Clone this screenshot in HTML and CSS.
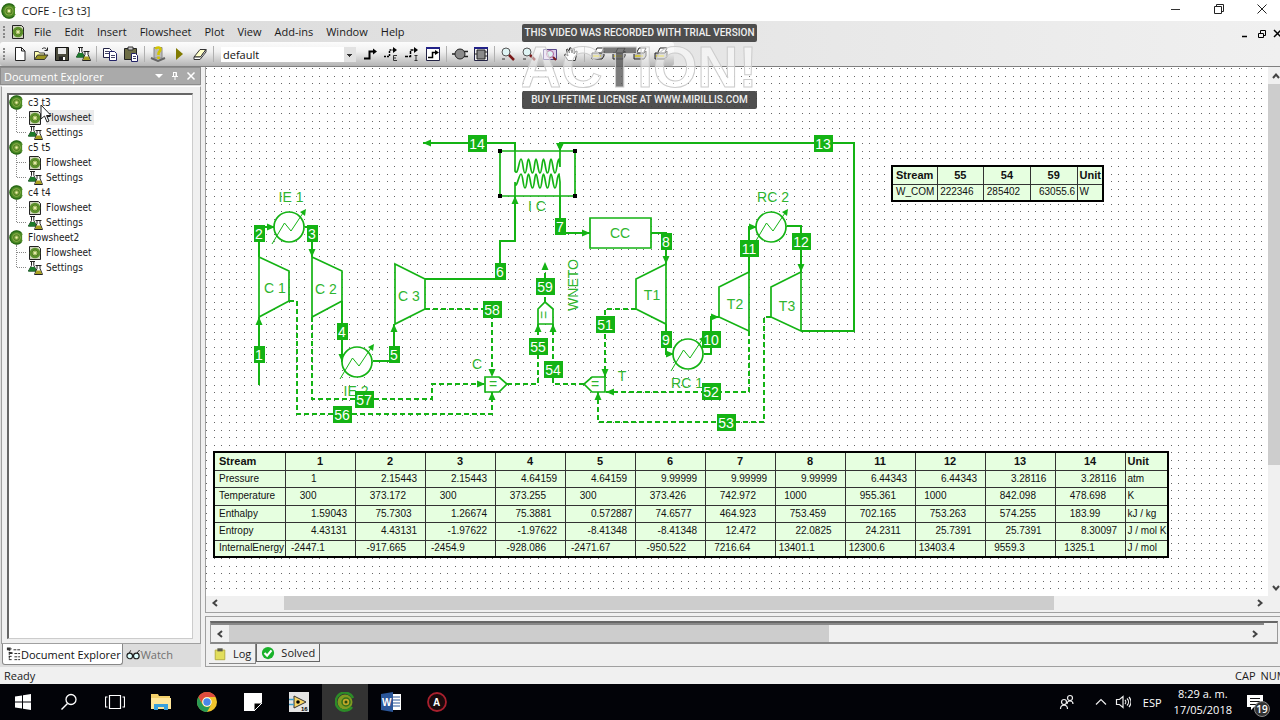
FILE: index.html
```html
<!DOCTYPE html>
<html lang="en">
<head>
    <meta charset="UTF-8">
    <meta name="viewport" content="width=device-width, initial-scale=1.0">
    <title>COFE - [c3 t3]</title>
    <link rel="stylesheet" href="styles.css">
</head>
<body>
    <!-- shared icons -->
    <svg class="sprite" aria-hidden="true">
        <symbol id="i-cofe" viewBox="0 0 16 16">
            <circle cx="8" cy="8" r="7.500" fill="#4c8a24"/>
            <path d="M13 3A7 7 0 1 0 13 13" fill="none" stroke="#2a6a18" stroke-width="1.500"/>
            <circle cx="8" cy="8" r="4.500" fill="#8cb04a"/>
            <circle cx="8" cy="8" r="3" fill="none" stroke="#4f7d22" stroke-width="1.200"/>
            <circle cx="8" cy="8" r="1.200" fill="#f1efb0"/>
            <path d="M14 5v6l2 1V4z" fill="#fff"/>
        </symbol>
        <symbol id="i-sheet" viewBox="0 0 16 16">
            <path d="M2.500 1.500h9l2 2v11h-11z" fill="#cfd3bd" stroke="#222"/>
            <circle cx="8" cy="8" r="5.300" fill="#5d922c"/>
            <circle cx="8" cy="8" r="3" fill="#a9c268" stroke="#4f7d22"/>
            <circle cx="8" cy="8" r="1" fill="#f6f3c4"/>
        </symbol>
        <symbol id="i-flask" viewBox="0 0 16 16">
            <path d="M3 1.500h5M4.500 1.500v4L1.500 11h8L6.800 5.500v-4" fill="#fff" stroke="#222"/>
            <path d="M3.500 7h4l2.500 4.500H1z" fill="#1c7a2c"/>
            <path d="M8.500 5.500h6M10 5.500v3L7.500 14.500h8L13 8.500v-3" fill="#fff" stroke="#222"/>
            <path d="M9.500 10.500h4l1.500 3.500H8z" fill="#a8a020"/>
        </symbol>
        <symbol id="i-zoom" viewBox="0 0 16 16">
            <circle cx="6" cy="6" r="4" fill="#dff4f4" stroke="#555"/>
            <path d="M9 9l5 5" stroke="#7a1a1a" stroke-width="2.500"/>
            <path d="M2 13h3" stroke="#333"/>
        </symbol>
        <symbol id="i-print" viewBox="0 0 16 16">
            <path d="M5 6l2-4h7l-2 4" fill="#fff" stroke="#222"/>
            <path d="M2 7h10l2-2v5l-2 3H2z" fill="#bbb" stroke="#222"/>
            <path d="M3 10h8" stroke="#d8c820" stroke-width="1.500"/>
        </symbol>
        <symbol id="i-unit" viewBox="0 0 16 16">
            <circle cx="8" cy="8" r="5" fill="#8a8a8a" stroke="#222"/>
            <path d="M0 8h3M12 5.500h4M12 10.500h4" stroke="#222" stroke-width="1.500"/>
        </symbol>
    </svg>

    <header class="titlebar">
        <svg class="icon"><use href="#i-cofe"/></svg>
        <h1>COFE - [c3 t3]</h1>
        <div class="window-buttons">
            <button aria-label="Minimize"><svg viewBox="0 0 12 12"><path d="M1 6.500h9" stroke="#333"/></svg></button>
            <button aria-label="Restore"><svg viewBox="0 0 12 12"><path d="M1.500 3.500h7v7h-7zM3.500 3V1.500h7v7H9" fill="none" stroke="#222"/></svg></button>
            <button aria-label="Close"><svg viewBox="0 0 12 12"><path d="M1.500 1.500l9 9M10.500 1.500l-9 9" stroke="#222"/></svg></button>
        </div>
    </header>

    <nav class="menubar">
        <span class="grip"></span>
        <svg class="icon"><use href="#i-sheet"/></svg>
        <button>File</button>
        <button>Edit</button>
        <button>Insert</button>
        <button>Flowsheet</button>
        <button>Plot</button>
        <button>View</button>
        <button>Add-ins</button>
        <button>Window</button>
        <button>Help</button>
        <div class="child-buttons">
            <button aria-label="Minimize document"><svg viewBox="0 0 10 10"><path d="M1 7.500h5" stroke="#000" stroke-width="1.500"/></svg></button>
            <button aria-label="Restore document"><svg viewBox="0 0 10 10"><path d="M1.500 4.500h5v4h-5zM3.500 4V1.500h5v5H7" fill="none" stroke="#000"/></svg></button>
            <button aria-label="Close document"><svg viewBox="0 0 10 10"><path d="M1 1l7 7M8 1L1 8" stroke="#000" stroke-width="1.500"/></svg></button>
        </div>
    </nav>

    <div class="toolbar-row">
        <div class="toolbar">
            <span class="grip"></span>
            <div class="group">
                <button aria-label="New"><svg viewBox="0 0 16 16"><path d="M3.500 1.500h6l3.500 3.500v9.500h-9.500zM9.500 1.500V5H13" fill="#fff" stroke="#222"/></svg></button>
                <button aria-label="Open"><svg viewBox="0 0 16 16"><path d="M1.500 13.500v-8h4l1 1.500h5v2" fill="#ffffb0" stroke="#444"/><path d="M1.500 13.500L4.500 9H15l-3.500 4.500z" fill="#9a9420" stroke="#333"/><path d="M9 3c2-2 4-1 5 1M14.500 1.500V4.500H11.500" fill="none" stroke="#222"/></svg></button>
                <button aria-label="Save"><svg viewBox="0 0 16 16"><path d="M1.500 1.500h13v13h-13z" fill="#4a4a3c" stroke="#111"/><path d="M4 2h8v6H4z" fill="#e8e8e8"/><path d="M5 10.500h6v4H5z" fill="#222"/><path d="M9 11h2v3H9z" fill="#fff"/></svg></button>
                <button aria-label="Settings"><svg><use href="#i-flask"/></svg></button>
            </div>
            <span class="separator"></span>
            <div class="group">
                <button aria-label="Copy"><svg viewBox="0 0 16 16"><path d="M1.500 2.500h6l2 2v7h-8z" fill="#fff" stroke="#224"/><path d="M7.500 5.500h5l2 2v7h-7z" fill="#fff" stroke="#226"/><path d="M3 5.500h4M3 7.500h4M9 9.500h4M9 11.500h4" stroke="#446"/></svg></button>
                <button aria-label="Paste"><svg viewBox="0 0 16 16"><path d="M1.500 2.500h12v11h-12z" fill="#6d6d45" stroke="#222"/><path d="M5 1h5v3H5z" fill="#ccc" stroke="#333"/><path d="M8.500 7.500h4l2 2v6h-6z" fill="#fff" stroke="#226"/><path d="M10 10.500h3M10 12.500h3" stroke="#446"/></svg></button>
            </div>
            <span class="separator"></span>
            <div class="group">
                <button aria-label="Validate"><svg viewBox="0 0 16 16"><path d="M4 1.500h8V12H4z" fill="#bbb" stroke="#888"/><path d="M5.500 3c1-2 5-2 5 .5 0 2-2 2-2 4V9M8.500 10.500V13" stroke="#d2c400" stroke-width="2.500" fill="none"/><path d="M1 12l7 3 7-3" fill="none" stroke="#666" stroke-width="2"/></svg></button>
                <button aria-label="Solve"><svg viewBox="0 0 16 16"><path d="M5 2l7 6-7 6z" fill="#807a00"/></svg></button>
                <button aria-label="Reset"><svg viewBox="0 0 16 16"><path d="M2 11l6-7.500h6L8.500 11z" fill="#ffffc8" stroke="#333"/><path d="M2 11v2.500h6L14 6V3.500L8.500 11z" fill="#fff" stroke="#333"/></svg></button>
            </div>
            <span class="separator"></span>
            <select aria-label="Stream type"><option>default</option></select>
            <div class="group">
                <button aria-label="Material stream"><svg viewBox="0 0 16 16"><path d="M2 12.500h5.500V5.500H11" fill="none" stroke="#000" stroke-width="2"/><path d="M11 2.500l4 3-4 3z"/></svg></button>
                <button aria-label="Energy stream"><svg viewBox="0 0 16 16"><path d="M1 10.500h5.500V4H11" fill="none" stroke="#000" stroke-width="1.500" stroke-dasharray="2 1"/><path d="M10 1l4 3-4 3z"/><path d="M14 9.500h-3.500v5H14M10.500 12H13" fill="none" stroke="#333"/></svg></button>
                <button aria-label="Information stream"><svg viewBox="0 0 16 16"><path d="M1 10.500h5.500V4H11" fill="none" stroke="#000" stroke-width="1.500" stroke-dasharray="3 1"/><path d="M10 1l4 3-4 3z"/><path d="M10.500 9.500h3M12 9.500v5M10.500 14.500h3" fill="none" stroke="#333"/></svg></button>
                <button aria-label="Auto route"><svg viewBox="0 0 16 16"><path d="M1.500 1.500h13v13h-13z" fill="#fff" stroke="#224"/><path d="M1 2h14" stroke="#228" stroke-width="2"/><path d="M3 11.500h4.500V6.500H10" fill="none" stroke="#000" stroke-width="1.500"/><path d="M10 4l4 2.500L10 9z"/></svg></button>
            </div>
            <span class="separator"></span>
            <div class="group">
                <button aria-label="Insert unit"><svg><use href="#i-unit"/></svg></button>
                <button aria-label="Insert flowsheet unit"><svg viewBox="0 0 16 16"><path d="M1.500 1.500h13v13h-13z" fill="#eee" stroke="#224"/><path d="M1 2h14" stroke="#228" stroke-width="2"/><path d="M4 4h8v9H4z" fill="#8a8a8a" stroke="#222"/><path d="M1 8h3M12 6h3M12 10h3" stroke="#222"/></svg></button>
            </div>
            <span class="separator"></span>
            <div class="group">
                <button aria-label="Zoom in"><svg><use href="#i-zoom"/></svg></button>
                <button aria-label="Zoom out"><svg><use href="#i-zoom"/></svg></button>
                <button aria-label="Zoom to fit"><svg viewBox="0 0 16 16"><path d="M1.500 3.500h13v10h-13z" fill="#dcd0ea" stroke="#5a4a8a"/><circle cx="8" cy="8" r="3.500" fill="#dff4f4" stroke="#b05a9a"/><path d="M11 11l3 3" stroke="#7a1a1a" stroke-width="2"/></svg></button>
                <button aria-label="Pan"><svg viewBox="0 0 16 16"><path d="M5 14.500L1.500 9l1-1L5 10 3.500 3.500l1.200-.5L6.500 7V2l1.300-.3L9 7l1-4.500 1.300.3L11 8l2-3 1.200.5-2 9z" fill="#fff" stroke="#333"/></svg></button>
            </div>
            <span class="separator"></span>
            <div class="group">
                <button aria-label="Print"><svg><use href="#i-print"/></svg></button>
                <button aria-label="Print all"><svg><use href="#i-print"/></svg></button>
                <button aria-label="Print setup"><svg><use href="#i-print"/></svg></button>
                <button aria-label="Print preview"><svg><use href="#i-print"/></svg></button>
            </div>
        </div>
    </div>

    <main class="workspace">
        <aside class="explorer">
            <div class="explorer-head">
                <h2>Document Explorer</h2>
                <button aria-label="Panel menu"><svg viewBox="0 0 10 10"><path d="M1 3h8L5 7z" fill="#fff"/></svg></button>
                <button aria-label="Auto hide"><svg viewBox="0 0 10 10"><path d="M3.500 1.500h3v4M2 5.500h6M5 5.500V9M6 1v4M3.500 1v4" fill="none" stroke="#fff"/></svg></button>
                <button aria-label="Close panel"><svg viewBox="0 0 10 10"><path d="M1.500 1.500l7 7M8.500 1.500l-7 7" stroke="#fff" stroke-width="1.500"/></svg></button>
            </div>
            <div class="tree-box">
                <ul class="tree">
                    <li>
                        <span class="node"><svg class="icon"><use href="#i-cofe"/></svg>c3 t3</span>
                        <ul>
                            <li class="node"><svg class="icon"><use href="#i-sheet"/></svg><span class="selected">Flowsheet</span></li>
                            <li class="node"><svg class="icon"><use href="#i-flask"/></svg><span>Settings</span></li>
                        </ul>
                    </li>
                    <li>
                        <span class="node"><svg class="icon"><use href="#i-cofe"/></svg>c5 t5</span>
                        <ul>
                            <li class="node"><svg class="icon"><use href="#i-sheet"/></svg><span>Flowsheet</span></li>
                            <li class="node"><svg class="icon"><use href="#i-flask"/></svg><span>Settings</span></li>
                        </ul>
                    </li>
                    <li>
                        <span class="node"><svg class="icon"><use href="#i-cofe"/></svg>c4 t4</span>
                        <ul>
                            <li class="node"><svg class="icon"><use href="#i-sheet"/></svg><span>Flowsheet</span></li>
                            <li class="node"><svg class="icon"><use href="#i-flask"/></svg><span>Settings</span></li>
                        </ul>
                    </li>
                    <li>
                        <span class="node"><svg class="icon"><use href="#i-cofe"/></svg>Flowsheet2</span>
                        <ul>
                            <li class="node"><svg class="icon"><use href="#i-sheet"/></svg><span>Flowsheet</span></li>
                            <li class="node"><svg class="icon"><use href="#i-flask"/></svg><span>Settings</span></li>
                        </ul>
                    </li>
                </ul>
                <svg class="pointer" viewBox="0 0 12 19"><path d="M1 1v14l3.500-3 2.500 6 2-1-2.500-5.500H11z" fill="#fff" stroke="#222"/></svg>
            </div>
            <div class="explorer-tabs">
                <button class="active"><svg class="icon" viewBox="0 0 16 16"><path d="M3.500 2v12M1 2.500h5M3 6.500h4M3 10.500h4M3 14h4M8 3.500h7M9 7.500h6M9 11h6M9 14h6" stroke="#222" stroke-dasharray="3 1" fill="none"/><path d="M1 1h4v3H1zM4 6h3v2H4z" fill="#333"/></svg>Document Explorer</button>
                <button><svg class="icon" viewBox="0 0 16 16"><path d="M3 7l2-4M11 7l3-4 1 1" fill="none" stroke="#222"/><circle cx="4" cy="9" r="3" fill="#dff" stroke="#222" stroke-width="1.300"/><circle cx="11" cy="9" r="3" fill="#dff" stroke="#222" stroke-width="1.300"/></svg>Watch</button>
            </div>
        </aside>

        <section class="document">
            <div class="sheet-row">
                <div class="sheet">
                    <svg class="drawing" viewBox="206 67 1062 529" width="1062" height="529">
                        <defs>
                            <pattern id="grid" x="206" y="68" width="98" height="98" patternUnits="userSpaceOnUse">
                                <g class="dots">
                                    <path id="dot-row" d="M0 .5H98"/>
                                    <use href="#dot-row" y="8"/>
                                    <use href="#dot-row" y="15"/>
                                    <use href="#dot-row" y="23"/>
                                    <use href="#dot-row" y="30"/>
                                    <use href="#dot-row" y="38"/>
                                    <use href="#dot-row" y="45"/>
                                    <use href="#dot-row" y="53"/>
                                    <use href="#dot-row" y="60"/>
                                    <use href="#dot-row" y="68"/>
                                    <use href="#dot-row" y="75"/>
                                    <use href="#dot-row" y="83"/>
                                    <use href="#dot-row" y="90"/>
                                </g>
                            </pattern>
                            <marker id="arrow" viewBox="0 0 8 8" refX="8" refY="4" markerWidth="8" markerHeight="8" markerUnits="userSpaceOnUse" orient="auto">
                                <path class="head" d="M0 .5L8 4 0 7.500z"/>
                            </marker>
                            <g id="exchanger">
                                <circle r="15"/>
                                <path class="thin" d="M-17 17L-4.500-4 2 4 14-14"/>
                                <path class="head" d="M17-18l-1 7-5-4z"/>
                            </g>
                        </defs>
                        <rect x="206" y="67" width="1057" height="522" fill="url(#grid)"/>

                        <!-- material streams -->
                        <g class="stream">
                            <path d="M259 385V317"/>
                            <path d="M259 257V227H275"/>
                            <path d="M305 227H312V257"/>
                            <path d="M342 301V362"/>
                            <path d="M373 361H394V324"/>
                            <path d="M425 279H500V241H515V196"/>
                            <path d="M560 178V233H590"/>
                            <path d="M651 233H666V264"/>
                            <path d="M666 324V354H674"/>
                            <path d="M704 354H711V317H719"/>
                            <path d="M749 272V227H757"/>
                            <path d="M787 226H801V272"/>
                            <path d="M801 331H854V143H560V151"/>
                            <path d="M515 160V143H423"/>
                        </g>

                        <!-- energy streams -->
                        <g class="stream energy">
                            <path d="M289 301H297V414H492V392"/>
                            <path d="M312 317V399H432V384H485"/>
                            <path d="M425 309H492V377"/>
                            <path d="M507 384H538V324"/>
                            <path d="M584 384H553V324"/>
                            <path d="M545 302V262"/>
                            <path d="M636 309H605V377"/>
                            <path d="M749 331V392H606"/>
                            <path d="M771 317H764V422H598V392"/>
                        </g>

                        <!-- units -->
                        <g class="unit">
                            <path d="M259 257L289 271V301L259 317z"/>
                            <path d="M312 257L342 271V301L312 317z"/>
                            <path d="M395 264L425 279V309L395 324z"/>
                            <path d="M666 264L636 279V309L666 324z"/>
                            <path d="M749 272L719 287V317L749 331z"/>
                            <path d="M801 272L771 287V317L801 331z"/>
                            <path d="M590 218H651V248H590z"/>
                            <path d="M485 377H499L507 384 499 392H485z"/>
                            <path d="M605 377H592L584 384 592 392H605z"/>
                            <path d="M538 324V309L545 302 553 309V324z"/>
                            <path d="M500 151H575V196H500z"/>
                            <path class="coil" d="M515 143V171C518 177 519 159 521 159S523 173 525 173 527 159 528.500 159 530.500 173 532.500 173 534.500 159 536 159 538 173 540 173 542 159 543.500 159 545.500 173 547.500 173 549.500 159 551 159 553 173 555 173 557 159 559 159L560 167V143"/>
                            <path class="coil" d="M515 196V182C516 192 519 174 521 174S523 188 525 188 527 174 528.500 174 530.500 188 532.500 188 534.500 174 536 174 538 188 540 188 542 174 543.500 174 545.500 188 547.500 188 549.500 174 551 174 553 188 555 188 557 174 559 174L560 182V196"/>
                            <path class="head" d="M556 143H564L560 151z"/>
                            <use href="#exchanger" x="289" y="227"/>
                            <use href="#exchanger" x="357" y="362"/>
                            <use href="#exchanger" x="688" y="354"/>
                            <use href="#exchanger" x="771" y="227"/>
                        </g>
                        <path class="handles" d="M498 149h4v4h-4zM573 149h4v4h-4zM498 194h4v4h-4zM573 194h4v4h-4z"/>

                        <g class="label">
                            <text x="275" y="293">C 1</text>
                            <text x="326" y="294">C 2</text>
                            <text x="409" y="301">C 3</text>
                            <text x="652" y="300">T1</text>
                            <text x="735" y="309">T2</text>
                            <text x="787" y="311">T3</text>
                            <text x="620" y="238">CC</text>
                            <text x="537" y="211">I C</text>
                            <text x="291" y="202">IE 1</text>
                            <text x="356" y="396">IE 2</text>
                            <text x="687" y="388">RC 1</text>
                            <text x="773" y="202">RC 2</text>
                            <text x="477" y="369">C</text>
                            <text x="622" y="381">T</text>
                            <text x="493" y="389">=</text>
                            <text x="595" y="389">=</text>
                            <text transform="translate(549 315) rotate(-90)">=</text>
                            <text transform="translate(578 285) rotate(-90)">WNETO</text>
                        </g>

                        <g class="tag" id="tags"></g>
                    </svg>
                    <table class="report small" id="work-table"></table>
                    <table class="report" id="stream-table"></table>
                </div>
                <div class="scroll vertical">
                    <button aria-label="Scroll up"><svg viewBox="0 0 10 10"><path d="M2 7l3-3.500L8 7" fill="none" stroke="#444" stroke-width="2"/></svg></button>
                    <div class="thumb"></div>
                    <button aria-label="Scroll down"><svg viewBox="0 0 10 10"><path d="M2 3l3 3.500L8 3" fill="none" stroke="#444" stroke-width="2"/></svg></button>
                </div>
            </div>
            <div class="scroll sheet-scroll">
                <button aria-label="Scroll left"><svg viewBox="0 0 10 10"><path d="M7 2L3.500 5 7 8" fill="none" stroke="#444" stroke-width="2"/></svg></button>
                <div class="track"><div class="thumb"></div></div>
                <button aria-label="Scroll right"><svg viewBox="0 0 10 10"><path d="M3 2l3.500 3L3 8" fill="none" stroke="#444" stroke-width="2"/></svg></button>
            </div>
            <div class="log">
                <div class="log-view">
                    <div class="scroll log-scroll">
                        <button aria-label="Scroll log left"><svg viewBox="0 0 10 10"><path d="M7 2L3.500 5 7 8" fill="none" stroke="#444" stroke-width="2"/></svg></button>
                        <div class="track"><div class="thumb"></div></div>
                        <button aria-label="Scroll log right"><svg viewBox="0 0 10 10"><path d="M3 2l3.500 3L3 8" fill="none" stroke="#444" stroke-width="2"/></svg></button>
                    </div>
                </div>
                <div class="log-tabs">
                    <button class="active"><svg class="icon" viewBox="0 0 16 16"><path d="M2.500 3.500h11v11h-11z" fill="#e2de5c" stroke="#b0a838"/><path d="M5 1.500h6v3.500H5z" fill="#5a5a4a"/></svg>Log</button>
                    <button><svg class="icon" viewBox="0 0 16 16"><circle cx="8" cy="8" r="7" fill="#19b22a"/><path d="M4 8l3 3 5-6" fill="none" stroke="#fff" stroke-width="2.500"/></svg>Solved</button>
                </div>
            </div>
        </section>
    </main>

    <div class="statusbar">
        <span>Ready</span>
        <span class="keys"><span>CAP</span><span>NUM</span></span>
    </div>

    <footer class="taskbar">
        <button aria-label="Start"><svg viewBox="0 0 20 20"><path d="M2 4.500l7-1v6H2zM10 3.300L18 2v7.500h-8zM2 10.500h7v6l-7-1zM10 10.500h8V18l-8-1.300z" fill="#fff"/></svg></button>
        <button aria-label="Search"><svg viewBox="0 0 20 20"><circle cx="12" cy="7.500" r="5" fill="none" stroke="#fff" stroke-width="1.300"/><path d="M8.500 11.500L2.500 17.500" stroke="#fff" stroke-width="1.500"/></svg></button>
        <button aria-label="Task view"><svg viewBox="0 0 20 20"><path d="M4.500 3.500h11v13h-11zM2.500 5h-2v10h2M17.500 5h2v10h-2" fill="none" stroke="#fff" stroke-width="1.200"/></svg></button>
        <button aria-label="File Explorer"><svg viewBox="0 0 20 20"><path d="M0 2h7l1 2h11v13H0z" fill="#f3d06a"/><path d="M0 6h20v11H0z" fill="#ffe69a"/><path d="M3 18v-6h14v6h-4v-3H7v3z" fill="#38a0dc"/></svg></button>
        <button aria-label="Chrome"><svg viewBox="0 0 20 20"><circle cx="10" cy="10" r="10" fill="#f2c52c"/><path d="M1.340 5A10 10 0 0 1 18.660 5H10a5 5 0 0 0-4.500 7z" fill="#dd4b3e"/><path d="M1.340 5A10 10 0 0 0 10 20l4.300-7.500a5 5 0 0 1-8.700 0z" fill="#279a55"/><circle cx="10" cy="10" r="4.700" fill="#fff"/><circle cx="10" cy="10" r="3.700" fill="#4a87e8"/></svg></button>
        <button aria-label="Notes"><svg viewBox="0 0 20 20"><path d="M1 1h18v9l-8 9H1z" fill="#fff"/><path d="M11 19v-8h8z" fill="#000" stroke="#fff"/></svg></button>
        <button aria-label="LabVIEW"><svg viewBox="0 0 20 20"><path d="M0 0h20v20H0z" fill="#e4e4e4"/><path d="M5 4l12 6-12 6z" fill="#f6d465" stroke="#333"/><path d="M0 7.500h5M0 12.500h5" stroke="#3c9cc8" stroke-width="1.500"/><circle cx="9" cy="10" r="1.800"/><text x="12" y="19" font-size="6" font-weight="bold">16</text></svg></button>
        <button class="active" aria-label="COFE"><svg viewBox="0 0 20 20"><circle cx="10" cy="10" r="7.500" fill="#7f9a22"/><path d="M18 6A9 9 0 1 0 17 15" fill="none" stroke="#2c8c28" stroke-width="2.500"/><circle cx="11" cy="10" r="4" fill="#c3a82a" stroke="#33701a" stroke-width="1.500"/><circle cx="11" cy="10" r="1.500" fill="#294a10"/></svg></button>
        <button aria-label="Word"><svg viewBox="0 0 20 20"><path d="M10 2h10v16H10z" fill="#fff"/><path d="M12 5h7M12 8h7M12 11h7M12 14h7" stroke="#2b579a"/><path d="M0 2l12-2v20L0 18z" fill="#2b579a"/><text x="1" y="14" font-size="10" font-weight="bold" fill="#fff">W</text></svg></button>
        <button aria-label="Action"><svg viewBox="0 0 20 20"><circle cx="10" cy="10" r="9" fill="#1a0a0c" stroke="#a8202e" stroke-width="1.800"/><text x="6" y="14" font-size="10" font-weight="bold" fill="#fff">A</text></svg></button>

        <div class="tray">
            <svg class="people" viewBox="0 0 16 16"><circle cx="11" cy="4" r="2.500"/><path d="M8 10c0-4 6-4 6 0"/><circle cx="5" cy="8" r="2.500"/><path d="M1.500 15c0-5 7-5 7 0"/></svg>
            <svg class="chevron" viewBox="0 0 12 12"><path d="M1 8.500L6 3.500 11 8.500"/></svg>
            <svg class="volume" viewBox="0 0 16 16"><path d="M1.500 5.500h3L8 2.500v11L4.500 10.500h-3zM10 6c1 1 1 3 0 4M12 4.500c2 2 2 5 0 7M14 3c2.500 3 2.500 7 0 10"/></svg>
            <span class="lang">ESP</span>
            <time class="clock" datetime="2018-05-17T08:29">8:29 a. m.<br>17/05/2018</time>
            <button class="notices" aria-label="19 notifications">
                <svg viewBox="0 0 16 16"><path d="M0 1h16v12H7l-3 3v-3H0z" fill="#fff"/><path d="M3 4.500h10M3 7.500h10M3 10.500h6" stroke="#111"/></svg>
                <span class="badge">19</span>
            </button>
        </div>
    </footer>

    <div class="watermark">
        <p>THIS VIDEO WAS RECORDED WITH TRIAL VERSION</p>
        <svg viewBox="0 0 235 49"><text x="-2" y="45">AC<tspan class="dark">T</tspan>ION!</text></svg>
        <p>BUY LIFETIME LICENSE AT WWW.MIRILLIS.COM</p>
    </div>

    <script src="script.js"></script>
</body>
</html>
```
FILE: styles.css
```css
* {
    box-sizing: border-box;
}

body {
    margin: 0;
    min-height: 100vh;
    display: flex;
    flex-direction: column;
    background-color: #f0f0f0;
    color: #1a1a1a;
    font-family: "Open Sans", "Noto Sans", sans-serif;
    font-size: 11px;
    overflow: hidden;
}

button {
    display: flex;
    align-items: center;
    justify-content: center;
    margin: 0;
    padding: 0;
    border: none;
    background: none;
    color: inherit;
    font: inherit;
}

h1, h2, p, ul {
    margin: 0;
    padding: 0;
    font-size: inherit;
    font-weight: normal;
    list-style: none;
}

.sprite {
    position: absolute;
    width: 0;
    height: 0;
}

.icon {
    width: 16px;
    height: 16px;
    flex: none;
}

/* title and menus */
.titlebar {
    display: flex;
    align-items: center;
    height: 21px;
    padding-left: 1px;
    background-color: #fff;
}

.titlebar h1 {
    margin-left: 5px;
}

.window-buttons {
    display: flex;
    align-self: flex-start;
    margin-left: auto;
    margin-right: -3px;
}

.window-buttons button {
    width: 43px;
    height: 17px;
}

.window-buttons svg {
    width: 12px;
    height: 12px;
}

.menubar {
    display: flex;
    align-items: center;
    gap: 1px;
    height: 21px;
    padding-left: 3px;
    background: linear-gradient(to right, #d9d9d9, #f0f0f0);
}

.menubar > .icon {
    margin: 0 1px 0 3px;
}

.menubar > button {
    padding: 0 6px;
}

.grip {
    width: 3px;
    height: 12px;
    border-left: 2px dotted #888;
}

.child-buttons {
    display: flex;
    align-self: flex-end;
    gap: 6px;
    height: 16px;
    margin-left: auto;
    margin-right: -3px;
}

.child-buttons button {
    width: 10px;
}

.child-buttons svg {
    width: 10px;
    height: 10px;
}

.toolbar-row {
    height: 25px;
    background: linear-gradient(to right, #d9d9d9, #f0f0f0);
    border-bottom: 1px solid #808080;
}

.toolbar {
    display: flex;
    align-items: center;
    width: 674px;
    height: 24px;
    padding-left: 3px;
    border-radius: 3px;
    background: linear-gradient(#fcfcfc, #f0f0f0 40%, #b4b4b4);
}

.toolbar .grip {
    margin-right: 4px;
}

.toolbar .group {
    display: flex;
    gap: 1px;
}

.toolbar button {
    width: 20px;
    height: 20px;
}

.toolbar button svg {
    width: 16px;
    height: 16px;
}

.separator {
    width: 1px;
    height: 16px;
    margin: 0 3px;
    background-color: #b0b0b0;
}

.toolbar select {
    width: 135px;
    height: 15px;
    margin: 0 4px;
    padding: 0 2px;
    border: none;
    border-radius: 0;
    color: #111;
    font-family: inherit;
    font-size: 11px;
    line-height: 15px;
    appearance: none;
    background:
        linear-gradient(#333, #333) right 4px top 7px / 5px 1px no-repeat,
        linear-gradient(#333, #333) right 5px top 8px / 3px 1px no-repeat,
        linear-gradient(#333, #333) right 6px top 9px / 1px 1px no-repeat,
        linear-gradient(#e2e2e2, #e2e2e2) right / 12px 100% no-repeat,
        #fff;
}

/* left panel */
.workspace {
    flex: 1;
    display: flex;
    min-height: 0;
}

.explorer {
    display: flex;
    flex-direction: column;
    width: 201px;
    margin-right: 4px;
    background-color: #e0e0e0;
}

.explorer-head {
    display: flex;
    align-items: center;
    height: 18px;
    padding: 0 1px 0 3px;
    border: 1px solid #8c8c8c;
    background-color: #aaa;
    color: #fff;
}

.explorer-head h2 {
    flex: 1;
}

.explorer-head button {
    width: 16px;
}

.explorer-head svg {
    width: 10px;
    height: 10px;
}

.tree-box {
    position: relative;
    flex: 1;
    margin: 1px 0 0 1px;
    border: 1px solid #a0a0a0;
    border-top-color: #fff;
    padding: 6px 7px 4px 5px;
    background-color: #f0f0f0;
    font-family: "DejaVu Sans Condensed", "DejaVu Sans", sans-serif;
    font-size: 10px;
}

.tree {
    height: 100%;
    border-top: 2px solid #666;
    border-left: 2px solid #666;
    border-right: 1px solid #ccc;
    border-bottom: 1px solid #ccc;
    background-color: #fff;
}

.node {
    display: flex;
    align-items: center;
    gap: 4px;
    height: 15px;
    line-height: 15px;
}

.tree > li > .node .icon {
    width: 15px;
    height: 15px;
}

.tree ul {
    position: relative;
    padding-left: 18px;
}

.tree ul::before {
    content: "";
    position: absolute;
    left: 7px;
    top: 0;
    height: 22px;
    border-left: 1px dotted #888;
}

.tree ul .node::before {
    content: "";
    position: absolute;
    left: 8px;
    width: 9px;
    border-top: 1px dotted #888;
}

.tree ul .node {
    gap: 3px;
}

.selected {
    padding-right: 2px;
    background-color: #ececec;
}

.pointer {
    position: absolute;
    left: 38px;
    top: 17px;
    width: 12px;
    height: 19px;
}

.explorer-tabs {
    display: flex;
    height: 23px;
    padding-left: 2px;
    background-color: #dcdcdc;
}

.explorer-tabs button {
    height: 21px;
    padding: 0 3px;
    color: #707070;
}

.explorer-tabs .icon {
    width: 15px;
}

.explorer-tabs .active {
    padding-right: 1px;
    border: 1px solid #888;
    border-top: none;
    border-radius: 0 0 3px 3px;
    background-color: #fff;
    color: #111;
}

/* flowsheet */
.document {
    flex: 1;
    display: flex;
    flex-direction: column;
    min-width: 0;
}

.sheet-row {
    flex: 1;
    display: flex;
    min-height: 0;
    border-left: 1px solid #a0a0a0;
}

.sheet {
    position: relative;
    flex: 1;
    overflow: hidden;
    background-color: #fff;
}

.drawing {
    display: block;
    font-family: "Liberation Sans", Arial, sans-serif;
}

.dots path {
    stroke: #666;
    stroke-dasharray: 1 7 1 6 1 7 1 6 1 7 1 6 1 7 1 6 1 7 1 6 1 7 1 6 1 7;
}

.stream > path {
    fill: none;
    stroke: #14b314;
    stroke-width: 2;
    marker-end: url(#arrow);
}

.energy > path {
    stroke-dasharray: 5 3;
}

.unit {
    fill: #fff;
    stroke: #14b314;
    stroke-width: 1.7;
}

.coil {
    fill: none;
}

.thin {
    fill: none;
    stroke-width: 1;
}

.head {
    fill: #14b314;
    stroke: none;
}

.label text {
    fill: #2fb52f;
    font-size: 14px;
    text-anchor: middle;
}

.tag rect {
    fill: #14b314;
}

.tag text {
    fill: #fff;
    font-size: 14px;
    text-anchor: middle;
}

.report {
    position: absolute;
    left: 7px;
    top: 384px;
    width: 956px;
    border: 2px solid #000;
    border-collapse: collapse;
    table-layout: fixed;
    background-color: #e6ffe0;
    color: #111;
    font-family: "Liberation Sans", Arial, sans-serif;
    font-size: 10px;
    line-height: 12px;
}

.report tr {
    height: 17px;
}

.report thead tr {
    height: 18px;
}

.report tr:nth-child(even) {
    height: 18px;
}

.report th,
.report td {
    padding: 0;
    border: 1px solid #333;
    white-space: nowrap;
}

.report thead th {
    font-size: 11px;
}

.report th:first-child {
    width: 71px;
    padding-left: 4px;
    text-align: left;
}

.report tbody th {
    font-weight: normal;
}

.report .unit-cell {
    width: 43px;
    padding-left: 2px;
    text-align: left;
}

/* numbers line up on the decimal point */
.report .whole {
    display: inline-block;
    width: 31px;
    text-align: right;
}

.report.small {
    left: 685px;
    top: 98px;
    width: 213px;
}

.report.small th:first-child {
    width: 45px;
    padding-left: 3px;
}

.report.small .unit-cell {
    width: 26px;
}

.report.small .whole {
    width: 36px;
}

/* scrollbars */
.scroll {
    display: flex;
    background-color: #f0f0f0;
}

.scroll svg {
    width: 10px;
    height: 10px;
}

.scroll button {
    width: 18px;
}

.scroll .track {
    flex: 1;
}

.thumb {
    height: 100%;
    background-color: #cdcdcd;
}

.vertical {
    flex-direction: column;
    width: 12px;
}

.vertical button {
    width: 15px;
    height: 17px;
}

.vertical .thumb {
    flex: none;
    width: 12px;
    height: 72%;
    margin-bottom: auto;
}

.sheet-scroll {
    height: 17px;
    padding-right: 11px;
    border-left: 1px solid #a0a0a0;
    border-bottom: 1px solid #a0a0a0;
    padding-bottom: 2px;
}

.sheet-scroll .thumb {
    width: 75%;
    margin-left: 60px;
}

.log {
    height: 51px;
    margin-top: 3px;
    padding-top: 4px;
    border: 1px solid #a0a0a0;
    border-right: none;
}

.log-view {
    height: 23px;
    margin: 0 2px 0 4px;
    border: 1px solid #999;
    border-top: 2px solid #666;
    border-bottom: 2px solid #888;
}

.log-scroll {
    height: 19px;
    margin-right: 13px;
    border-top: 2px solid #888;
}

.log-scroll .thumb {
    width: 59%;
}

.log-tabs {
    display: flex;
    align-items: flex-start;
    padding-left: 3px;
}

.log-tabs button {
    height: 18px;
    padding: 0 4px;
    gap: 6px;
    border: 1px solid #666;
    border-top: none;
}

.log-tabs .active {
    height: 20px;
    border-left: none;
    border-color: #888;
}

.log-tabs .icon {
    width: 14px;
}

/* bottom bars */
.statusbar {
    display: flex;
    align-items: center;
    justify-content: space-between;
    height: 17px;
    padding-left: 4px;
}

.keys {
    display: flex;
    gap: 5px;
    width: 45px;
    overflow: hidden;
}

.taskbar {
    display: flex;
    height: 36px;
    background-color: #020308;
    color: #fff;
}

.taskbar > button {
    width: 46px;
}

.taskbar > button svg {
    width: 20px;
    height: 20px;
    font-family: "Liberation Sans", sans-serif;
}

.taskbar > .active {
    background-color: #333;
}

.tray {
    display: flex;
    align-items: center;
    margin-left: auto;
    padding-right: 10px;
}

.tray > svg {
    height: 16px;
    fill: none;
    stroke: #eee;
    stroke-width: 1.2;
}

.people {
    width: 16px;
    margin-right: 20px;
}

.chevron {
    width: 12px;
    margin-right: 8px;
}

.volume {
    width: 16px;
    margin-right: 12px;
}

.clock {
    margin: 0 15px 0 12px;
    line-height: 16px;
    text-align: center;
}

.notices {
    position: relative;
    width: 23px;
    height: 24px;
    justify-content: flex-start;
}

.notices svg {
    width: 16px;
    height: 16px;
}

.badge {
    position: absolute;
    right: 0;
    bottom: -3px;
    width: 16px;
    height: 16px;
    border: 1px solid #888;
    border-radius: 50%;
    background-color: #333;
    font-size: 10px;
    line-height: 14px;
    font-weight: 600;
}

/* recorder watermark */
.watermark {
    position: absolute;
    left: 522px;
    top: 24px;
    width: 235px;
    text-align: center;
    pointer-events: none;
}

.watermark p {
    height: 18px;
    border-radius: 2px;
    background-color: rgba(60, 60, 60, 0.9);
    color: #f0f0f0;
    font-family: Roboto, sans-serif;
    font-size: 10px;
    font-weight: 500;
    line-height: 18px;
    white-space: nowrap;
}

.watermark svg {
    display: block;
    height: 49px;
}

.watermark text {
    fill: rgba(255, 255, 255, 0.5);
    stroke: #ccc;
    font-family: "Liberation Sans", sans-serif;
    font-size: 57px;
    font-weight: bold;
}

.watermark .dark {
    fill: rgba(90, 90, 90, 0.8);
}
```
FILE: script.js
```javascript
const workTable = {
    columns: ['55', '54', '59'],
    rows: [
        ['W_COM', 'W', '222346 285402 63055.6']
    ]
};

const streamTable = {
    columns: ['1', '2', '3', '4', '5', '6', '7', '8', '11', '12', '13', '14'],
    rows: [
        ['Pressure', 'atm', '1 2.15443 2.15443 4.64159 4.64159 9.99999 9.99999 9.99999 6.44343 6.44343 3.28116 3.28116'],
        ['Temperature', 'K', '300 373.172 300 373.255 300 373.426 742.972 1000 955.361 1000 842.098 478.698'],
        ['Enthalpy', 'kJ / kg', '1.59043 75.7303 1.26674 75.3881 0.572887 74.6577 464.923 753.459 702.165 753.263 574.255 183.99'],
        ['Entropy', 'J / mol K', '4.43131 4.43131 -1.97622 -1.97622 -8.41348 -8.41348 12.472 22.0825 24.2311 25.7391 25.7391 8.30097'],
        ['InternalEnergy', 'J / mol', '-2447.1 -917.665 -2454.9 -928.086 -2471.67 -950.522 7216.64 13401.1 12300.6 13403.4 9559.3 1325.1']
    ]
};

// text, centre x, top y
const tags = [
    ['1', 259, 346], ['2', 259, 225], ['3', 312, 225], ['4', 342, 323],
    ['5', 394, 346], ['6', 500, 263], ['7', 560, 218], ['8', 666, 233],
    ['9', 666, 331], ['10', 711, 331], ['11', 749, 240], ['12', 801, 233],
    ['13', 823, 135], ['14', 477, 135], ['51', 605, 316], ['52', 711, 383],
    ['53', 726, 414], ['54', 553, 361], ['55', 538, 338], ['56', 342, 406],
    ['57', 364, 391], ['58', 492, 301], ['59', 545, 278]
];

function numberCell(value) {
    const [whole, fraction] = value.split('.');
    const rest = fraction ? `.${fraction}` : '';
    return `<td><span class="whole">${whole}</span>${rest}</td>`;
}

function renderTable(id, data) {
    const head = data.columns.map(name => `<th scope="col">${name}</th>`).join('');
    const body = data.rows.map(([name, unit, values]) =>
        `<tr><th scope="row">${name}</th>${values.split(' ').map(numberCell).join('')}<td class="unit-cell">${unit}</td></tr>`
    ).join('');
    document.getElementById(id).innerHTML =
        `<thead><tr><th scope="col">Stream</th>${head}<th scope="col" class="unit-cell">Unit</th></tr></thead><tbody>${body}</tbody>`;
}

function renderTags() {
    document.getElementById('tags').innerHTML = tags.map(([text, x, y]) => {
        const width = text.length > 1 ? 19 : 11;
        return `<rect x="${x - Math.floor(width / 2)}" y="${y}" width="${width}" height="17"/>` +
            `<text x="${x}" y="${y + 14}">${text}</text>`;
    }).join('');
}

renderTable('work-table', workTable);
renderTable('stream-table', streamTable);
renderTags();
```
